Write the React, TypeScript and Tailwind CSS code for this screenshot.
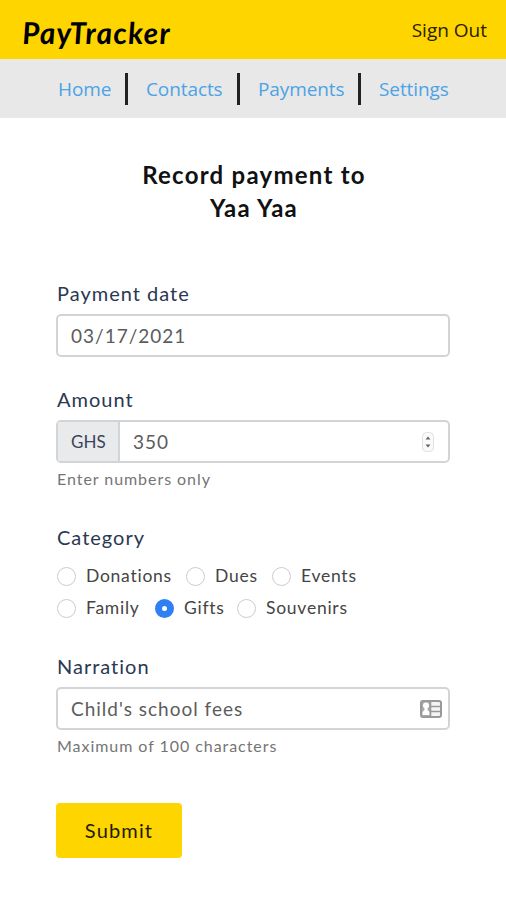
import { useState } from "react";

const links = [
  { label: "Home", className: "w-[53px]" },
  { label: "Contacts", className: "w-[77px]" },
  { label: "Payments", className: "w-[86px]" },
  { label: "Settings", className: "w-[70px]" },
];

const categoryRows = [
  [
    { label: "Donations", className: "w-[129px]" },
    { label: "Dues", className: "w-[86px]" },
    { label: "Events", className: "" },
  ],
  [
    { label: "Family", className: "w-[98px]" },
    { label: "Gifts", className: "w-[82px]" },
    { label: "Souvenirs", className: "" },
  ],
];

const labelStyle = "block h-[30px] pl-px text-[20px] leading-[28px] tracking-[1px] text-[#2a3852]";
const boxStyle = "flex h-[43px] items-center rounded-[5px] border-2 border-[#d2d4d5]";
const inputStyle = "min-w-0 flex-1 bg-transparent pl-[13px] pt-px text-[19px] tracking-[1px] text-[#5c5c5c] outline-none";
const helpStyle = "mt-[6px] h-[22px] pl-px text-[16px] leading-[20px] tracking-[0.95px] text-[#757575]";

function Header() {
  return (
    <header className="flex h-[59px] items-center justify-between bg-[#ffd500] pl-[22px] pr-[19px] text-black">
      <span className="mt-[4px] skew-x-[3deg] font-['Lato'] text-[30px] font-bold italic leading-[36px] tracking-[1.2px]">
        PayTracker
      </span>
      <a className="font-['Open_Sans'] text-[19px] leading-[28px] text-[#292200]">Sign Out</a>
    </header>
  );
}

function Nav() {
  return (
    <nav className="flex h-[59px] items-center bg-[#e8e8e8] pl-[58px] font-['Open_Sans'] text-[19px] tracking-[-0.1px] text-[#4ca3e5]">
      {links.map((link, i) => (
        <div key={link.label} className="flex items-center">
          {i > 0 && <span className="ml-[14px] mr-[18px] h-[32px] w-[3px] bg-[#222]" />}
          <a className={`whitespace-nowrap pt-px ${link.className}`}>{link.label}</a>
        </div>
      ))}
    </nav>
  );
}

function Stepper() {
  return (
    <svg width="12" height="20" viewBox="0 0 12 20" className="mr-[14px]">
      <rect x="0.5" y="0.5" width="11" height="19" rx="4" fill="#fafafa" stroke="#e0e0e0" />
      <path d="M3.5 7.5 6 4.5 8.5 7.5Z M3.5 12.5 6 15.5 8.5 12.5Z" fill="#666" />
    </svg>
  );
}

function ContactCard() {
  return (
    <svg width="22" height="18" viewBox="0 0 22 18" className="mr-[6px]">
      <rect x="1" y="1" width="20" height="16" rx="2" fill="#f4f4f4" stroke="#999" strokeWidth="2" />
      <path d="M2 2H10V16H2Z" fill="#aaa" />
      <circle cx="6" cy="5.5" r="3" fill="#fff" />
      <path d="M4.5 8H7.5V10L9.5 12V15H2.5V12L4.5 10Z" fill="#fff" />
      <path d="M10.5 1V17 M10 6.5H21 M10 11.5H21" stroke="#999" strokeWidth="1.6" />
    </svg>
  );
}

export default function App() {
  const [category, setCategory] = useState("Gifts");

  return (
    <div className="h-[900px] w-[506px] overflow-hidden bg-white font-['Lato',sans-serif]">
      <Header />
      <Nav />
      <form className="px-[56px]" onSubmit={(e) => e.preventDefault()}>
        <h1 className="mt-[40px] mb-[55px] pl-[2px] text-center text-[24px] font-bold leading-[33px] tracking-[1.25px] text-[#111]">
          Record payment to
          <br />
          Yaa Yaa
        </h1>

        <div>
          <label className={labelStyle}>Payment date</label>
          <div className={`mt-[5px] ${boxStyle}`}>
            <input className={inputStyle} defaultValue="03/17/2021" />
          </div>
        </div>

        <div className="mt-[28px]">
          <label className={labelStyle}>Amount</label>
          <div className={`mt-[5px] ${boxStyle}`}>
            <span className="flex h-full w-[62px] items-center border-r-2 border-[#d2d4d5] bg-[#e9eaec] pl-[13px] pt-px text-[17px] text-[#38435a]">
              GHS
            </span>
            <input className={inputStyle} defaultValue="350" />
            <Stepper />
          </div>
          <p className={helpStyle}>Enter numbers only</p>
        </div>

        <div className="mt-[32px]">
          <label className={labelStyle}>Category</label>
          <div className="mt-[7px] pl-px">
            {categoryRows.map((row) => (
              <div key={row[0].label} className="flex h-[32px] items-center">
                {row.map(({ label, className }) => (
                  <label key={label} className={`flex items-center text-[17.5px] leading-[26px] tracking-[0.75px] text-[#444] ${className}`}>
                    <input
                      type="radio"
                      name="category"
                      checked={category === label}
                      onChange={() => setCategory(label)}
                      className="mr-[10px] size-[19px] shrink-0 appearance-none rounded-full border-[1.5px] border-[#ccc] bg-white checked:border-[7px] checked:border-[#2f80f5]"
                    />
                    {label}
                  </label>
                ))}
              </div>
            ))}
          </div>
        </div>

        <div className="mt-[28px]">
          <label className={labelStyle}>Narration</label>
          <div className={`mt-[5px] ${boxStyle}`}>
            <input className={inputStyle} defaultValue="Child's school fees" />
            <ContactCard />
          </div>
          <p className={helpStyle}>Maximum of 100 characters</p>
        </div>

        <button className="mt-[45px] h-[55px] w-[126px] rounded-[4px] bg-[#ffd500] pb-[2px] text-[20px] tracking-[1.15px] text-[#211c00]">
          Submit
        </button>
      </form>
    </div>
  );
}
